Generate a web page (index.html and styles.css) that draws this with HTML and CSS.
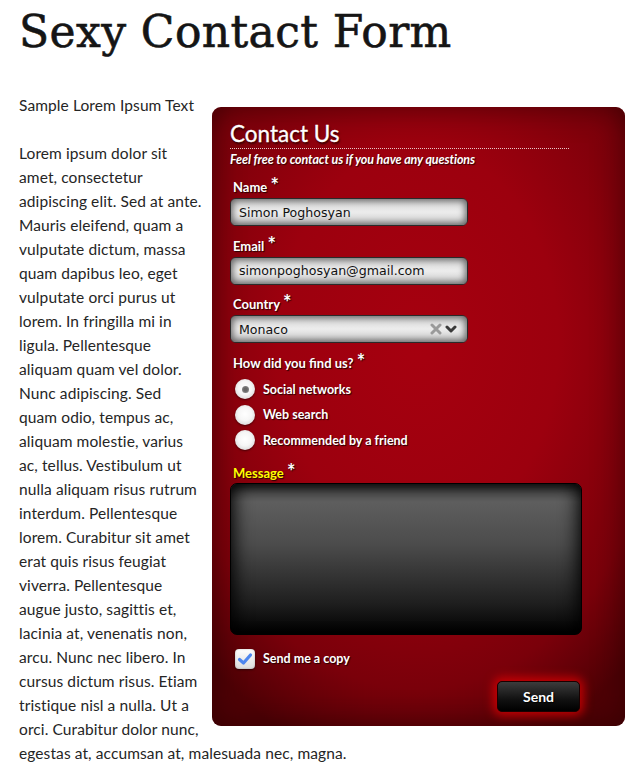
FILE: index.html
```html
<!DOCTYPE html>
<html>
<head>
<meta charset="utf-8">
<link rel="stylesheet" href="styles.css">
</head>
<body>
<h1 class="title">Sexy Contact Form</h1>
<form class="contact">
  <h2 class="contact-title">Contact Us</h2>
  <p class="contact-sub">Feel free to contact us if you have any questions</p>

  <div class="field">
    <div class="label">Name <span class="req">*</span></div>
    <div class="input">Simon Poghosyan</div>
  </div>
  <div class="field">
    <div class="label">Email <span class="req">*</span></div>
    <div class="input">simonpoghosyan@gmail.com</div>
  </div>
  <div class="field">
    <div class="label">Country <span class="req">*</span></div>
    <div class="input select">
      <span>Monaco</span>
      <span class="sel-icons">
        <svg width="12" height="12" viewBox="0 0 12 12"><path d="M2 2 L10 10 M10 2 L2 10" stroke="#9a9a9a" stroke-width="3" stroke-linecap="round"/></svg>
        <svg width="12" height="10" viewBox="0 0 12 10"><path d="M2 3 L6 7 L10 3" stroke="#3a3a3a" stroke-width="3" fill="none" stroke-linecap="round" stroke-linejoin="round"/></svg>
      </span>
    </div>
  </div>

  <div class="label q">How did you find us? <span class="req">*</span></div>
  <div class="radios">
    <div class="radio-row"><span class="radio checked"></span><span class="opt">Social networks</span></div>
    <div class="radio-row"><span class="radio"></span><span class="opt">Web search</span></div>
    <div class="radio-row"><span class="radio"></span><span class="opt">Recommended by a friend</span></div>
  </div>

  <div class="label msg"><span class="yellow">Message</span> <span class="req">*</span></div>
  <div class="textarea"></div>

  <div class="check-row">
    <span class="checkbox">
      <svg width="16" height="14" viewBox="0 0 16 14"><path d="M2.5 7.5 L6.5 11 L13.5 3" stroke="#4d86ee" stroke-width="3.2" fill="none" stroke-linecap="round" stroke-linejoin="round"/></svg>
    </span>
    <span class="opt">Send me a copy</span>
  </div>

  <div class="actions"><span class="send">Send</span></div>
</form>

<p class="intro">Sample Lorem Ipsum Text</p>
<p class="body-text">Lorem ipsum dolor sit<br>amet, consectetur<br>adipiscing elit. Sed at ante.<br>Mauris eleifend, quam a<br>vulputate dictum, massa<br>quam dapibus leo, eget<br>vulputate orci purus ut<br>lorem. In fringilla mi in<br>ligula. Pellentesque<br>aliquam quam vel dolor.<br>Nunc adipiscing. Sed<br>quam odio, tempus ac,<br>aliquam molestie, varius<br>ac, tellus. Vestibulum ut<br>nulla aliquam risus rutrum<br>interdum. Pellentesque<br>lorem. Curabitur sit amet<br>erat quis risus feugiat<br>viverra. Pellentesque<br>augue justo, sagittis et,<br>lacinia at, venenatis non,<br>arcu. Nunc nec libero. In<br>cursus dictum risus. Etiam<br>tristique nisl a nulla. Ut a<br>orci. Curabitur dolor nunc,<br>egestas at, accumsan at, malesuada nec, magna.</p>
</body>
</html>
```
FILE: styles.css
```css
html, body {
  margin: 0;
  padding: 0;
  background: #fff;
}
body {
  padding: 0 16px 0 19px;
  font-family: Lato, "Open Sans", sans-serif;
  color: #252525;
}
.title {
  margin: 0;
  height: 93px;
  font-family: "DejaVu Serif", serif;
  font-weight: normal;
  font-size: 44px;
  line-height: 63px;
  letter-spacing: 0.4px;
  color: #151515;
  -webkit-text-stroke: 0.6px #151515;
}
.intro, .body-text {
  margin: 0;
  font-size: 15.5px;
  line-height: 24px;
  letter-spacing: 0.1px;
}
.intro { margin-bottom: 24px; }

.contact {
  float: right;
  width: 413px;
  box-sizing: border-box;
  margin: 14px 0 0 6px;
  padding: 13px 43px 14px 18px;
  border-radius: 9px;
  background: radial-gradient(ellipse 75% 70% at 50% 38%, #a6000f 0%, #9c000e 45%, #7a000a 80%, #4e0005 100%);
  box-shadow: inset 0 0 30px rgba(40,0,0,.6);
  color: #fff;
  font-family: Lato, sans-serif;
}
.contact-title {
  margin: 0;
  width: 339px;
  font-size: 22.5px;
  line-height: 28px;
  font-weight: normal;
  border-bottom: 1px dotted #e8c8c8;
  text-shadow: 1px 2px 2px #300;
  -webkit-text-stroke: 0.3px #fff;
}
.contact-sub {
  margin: 3px 0 0;
  font-size: 12.5px;
  line-height: 16px;
  font-style: italic;
  font-weight: bold;
  letter-spacing: -0.1px;
  text-shadow: 1px 1px 1px #300;
}
.field { margin-bottom: 10.5px; }
.contact-sub + .field { margin-top: 10px; }
.label {
  padding-left: 3px;
  font-size: 13px;
  line-height: 18px;
  font-weight: bold;
  margin-bottom: 2px;
  text-shadow: 1px 1px 1px #200;
}
.req {
  font-size: 20px;
  font-weight: bold;
  vertical-align: top;
  line-height: 15px;
}
.input {
  width: 238px;
  height: 28px;
  box-sizing: border-box;
  border: 1px solid #2a2a2a;
  border-radius: 6px;
  padding: 0 8px;
  display: flex;
  align-items: center;
  font-family: "DejaVu Sans", sans-serif;
  font-size: 12.6px;
  color: #111;
  background: linear-gradient(#d8d8d8, #ececec 50%, #d0d0d0);
  box-shadow: inset 0 0 7px 2px rgba(0,0,0,.55);
}
.select { justify-content: space-between; padding-right: 10px; }
.sel-icons { display: flex; align-items: center; gap: 3px; }
.q { margin-bottom: 5px; }
.radios { margin-bottom: 10.5px; }
.radio-row {
  height: 25.5px;
  display: flex;
  align-items: center;
  padding-left: 5px;
}
.radio {
  width: 20px;
  height: 20px;
  border-radius: 50%;
  background: radial-gradient(circle at 50% 45%, #fff 0%, #f6f6f6 45%, #c8c8c8 100%);
  box-shadow: 0 1px 2px rgba(0,0,0,.5);
  margin-right: 8px;
  display: flex;
  align-items: center;
  justify-content: center;
}
.radio.checked::after {
  content: "";
  width: 7px;
  height: 7px;
  border-radius: 50%;
  background: radial-gradient(circle, #666 30%, #999 100%);
}
.opt {
  font-size: 12.5px;
  font-weight: bold;
  text-shadow: 1px 1px 1px #200;
}
.msg { margin-bottom: 1px; }
.yellow { color: #ffff00; }
.textarea {
  width: 352px;
  height: 152px;
  box-sizing: border-box;
  border: 1px solid #000;
  border-radius: 7px;
  background: linear-gradient(#3a3a3a 0%, #5e5e5e 12%, #4c4c4c 40%, #1e1e1e 80%, #000 100%);
  box-shadow: inset 12px 0 16px -6px rgba(0,0,0,.7), inset -12px 0 16px -6px rgba(0,0,0,.7), inset 0 6px 8px -2px rgba(0,0,0,.6);
}
.check-row {
  margin-top: 14px;
  height: 20px;
  display: flex;
  align-items: center;
  padding-left: 5px;
}
.checkbox {
  width: 20px;
  height: 20px;
  box-sizing: border-box;
  border-radius: 4px;
  margin-right: 8px;
  background: linear-gradient(#ffffff, #dcdcdc);
  box-shadow: 0 1px 2px rgba(0,0,0,.5), inset 0 0 2px rgba(0,0,0,.3);
  display: flex;
  align-items: center;
  justify-content: center;
}
.actions {
  margin-top: 12px;
  display: flex;
  justify-content: flex-end;
  padding-right: 2px;
}
.send {
  width: 83px;
  height: 31px;
  box-sizing: border-box;
  border: 1px solid #1a0000;
  border-radius: 5px;
  background: linear-gradient(#3c3c3c, #111 60%, #000);
  box-shadow: 0 0 10px 4px rgba(255,0,0,.6);
  display: flex;
  align-items: center;
  justify-content: center;
  font-size: 14px;
  font-weight: bold;
  color: #fff;
  text-shadow: 1px 1px 1px #000;
}
```
